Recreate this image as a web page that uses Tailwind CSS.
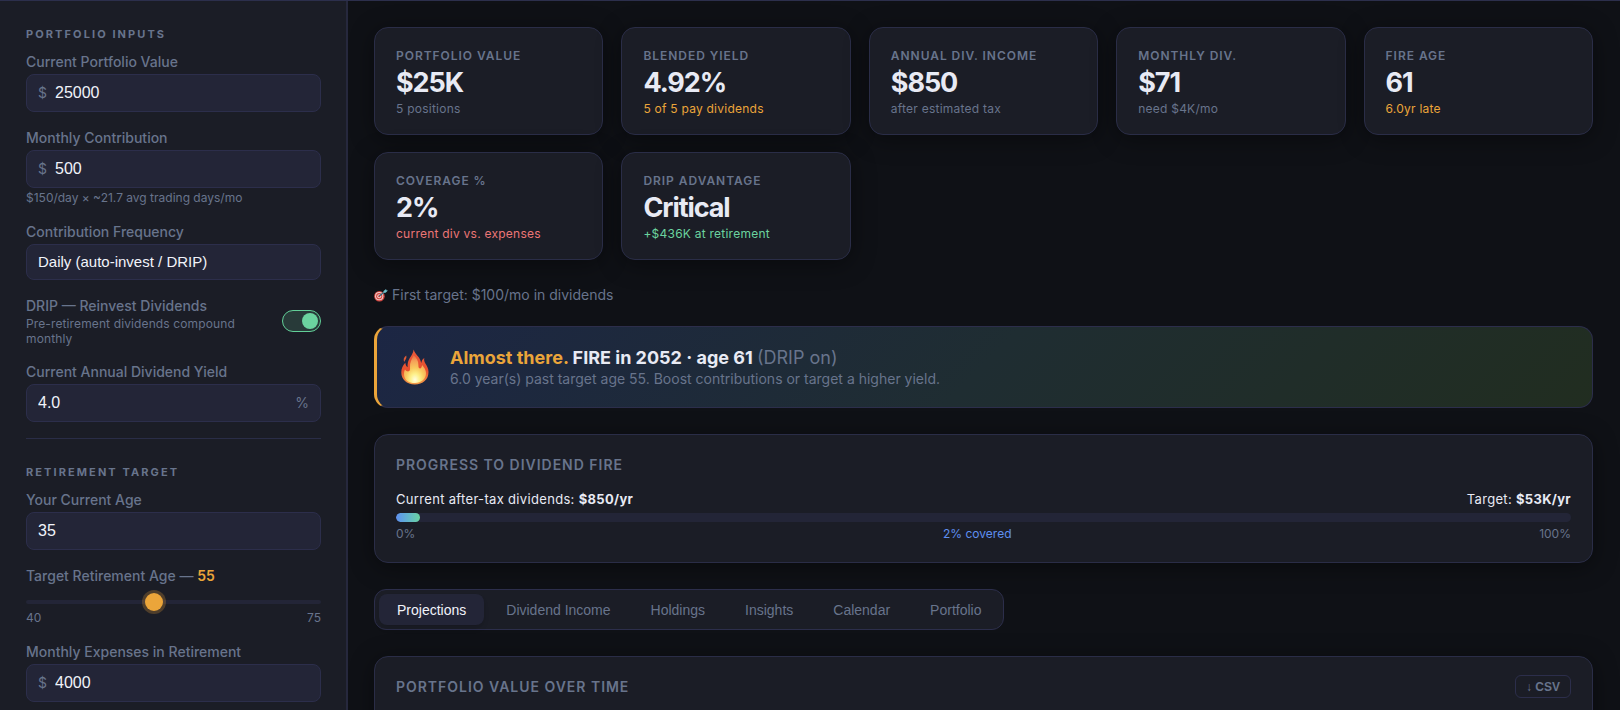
<!DOCTYPE html>
<html lang="en">
<head>
    <meta charset="UTF-8">
    <meta name="viewport" content="width=device-width, initial-scale=1.0">
    <title>Dividend FIRE Planner</title>
    <script src="https://cdn.jsdelivr.net/npm/@tailwindcss/browser@4"></script>
</head>
<body class="h-screen overflow-hidden bg-[#0f1116] font-[Inter,sans-serif] text-[#e8eaf4] antialiased">
    <div class="flex h-full border-t border-[#2c2f4c]">

        <!-- Sidebar -->
        <aside class="w-[348px] shrink-0 overflow-hidden border-r-2 border-[#26283d] bg-[#1b1d26] pr-[25px] pl-[26px] text-[#68748c]">
            <section class="border-b border-[#2a2d47] pt-[25px] pb-4">
                <h2 class="mb-2.5 text-[11px] leading-4 font-bold tracking-[0.19em] uppercase">Portfolio Inputs</h2>

                <div class="flex flex-col gap-4">
                    <div>
                        <label for="portfolioValue" class="mb-0.5 block text-sm leading-5 font-medium">Current Portfolio Value</label>
                        <div class="flex h-[38px] items-center gap-2 rounded-lg border border-[#2c2e4b] bg-[#232537] px-[11px]">
                            <span class="text-sm">$</span>
                            <input id="portfolioValue" type="text" inputmode="numeric" value="25000" class="w-full min-w-0 bg-transparent font-[Liberation_Sans,sans-serif] text-base text-[#f1f3fa] outline-none">
                        </div>
                    </div>

                    <div>
                        <label for="monthly" class="mb-0.5 block text-sm leading-5 font-medium">Monthly Contribution</label>
                        <div class="flex h-[38px] items-center gap-2 rounded-lg border border-[#2c2e4b] bg-[#232537] px-[11px]">
                            <span class="text-sm">$</span>
                            <input id="monthly" type="text" inputmode="numeric" value="500" class="w-full min-w-0 bg-transparent font-[Liberation_Sans,sans-serif] text-base text-[#f1f3fa] outline-none">
                        </div>
                        <p class="mt-0.5 text-xs leading-4">$150/day × ~21.7 avg trading days/mo</p>
                    </div>

                    <div>
                        <label for="frequency" class="mb-0.5 block text-sm leading-5 font-medium">Contribution Frequency</label>
                        <select id="frequency" class="h-9 w-full appearance-none rounded-lg border border-[#2c2e4b] bg-[#232537] px-[11px] font-[Liberation_Sans,sans-serif] text-[15px] text-[#f1f3fa] outline-none">
                            <option>Daily (auto-invest / DRIP)</option>
                            <option>Weekly</option>
                            <option>Monthly</option>
                        </select>
                    </div>

                    <div class="flex items-center justify-between gap-4">
                        <label for="drip">
                            <span class="block text-sm leading-5 font-medium">DRIP — Reinvest Dividends</span>
                            <span class="block text-xs leading-[15px] tracking-[0.01em]">Pre-retirement dividends compound monthly</span>
                        </label>
                        <input id="drip" type="checkbox" checked class="h-[22px] w-[39px] shrink-0 appearance-none rounded-full border border-[#62cf98] bg-[#283a39] p-0.5 before:block before:size-4 before:rounded-full before:bg-[#6bd39f] checked:before:ml-[17px]">
                    </div>

                    <div>
                        <label for="yield" class="mb-0.5 block text-sm leading-5 font-medium">Current Annual Dividend Yield</label>
                        <div class="flex h-[38px] items-center gap-2 rounded-lg border border-[#2c2e4b] bg-[#232537] px-[11px]">
                            <input id="yield" type="text" inputmode="decimal" value="4.0" class="w-full min-w-0 bg-transparent font-[Liberation_Sans,sans-serif] text-base text-[#f1f3fa] outline-none">
                            <span class="text-sm">%</span>
                        </div>
                    </div>
                </div>
            </section>

            <section class="pt-[25px] pb-4">
                <h2 class="mb-2.5 text-[11px] leading-4 font-bold tracking-[0.19em] uppercase">Retirement Target</h2>

                <div class="flex flex-col gap-4">
                    <div>
                        <label for="age" class="mb-0.5 block text-sm leading-5 font-medium">Your Current Age</label>
                        <div class="flex h-[38px] items-center rounded-lg border border-[#2c2e4b] bg-[#232537] px-[11px]">
                            <input id="age" type="text" inputmode="numeric" value="35" class="w-full min-w-0 bg-transparent font-[Liberation_Sans,sans-serif] text-base text-[#f1f3fa] outline-none">
                        </div>
                    </div>

                    <div>
                        <label for="targetAge" class="block text-sm leading-5 font-medium">Target Retirement Age — <span id="targetAgeValue" class="font-semibold text-[#eba53a]">55</span></label>
                        <input id="targetAge" type="range" min="40" max="75" value="55" class="mt-2 block h-4 w-full appearance-none bg-transparent [&::-webkit-slider-runnable-track]:h-1 [&::-webkit-slider-runnable-track]:rounded-full [&::-webkit-slider-runnable-track]:bg-[#232537] [&::-webkit-slider-thumb]:-mt-[7px] [&::-webkit-slider-thumb]:size-[18px] [&::-webkit-slider-thumb]:appearance-none [&::-webkit-slider-thumb]:rounded-full [&::-webkit-slider-thumb]:bg-[#eba53a] [&::-webkit-slider-thumb]:shadow-[0_0_0_3px_rgba(235,165,58,0.25)]">
                        <div class="flex justify-between text-xs leading-4">
                            <span>40</span>
                            <span>75</span>
                        </div>
                    </div>

                    <div>
                        <label for="expenses" class="mb-0.5 block text-sm leading-5 font-medium">Monthly Expenses in Retirement</label>
                        <div class="flex h-[38px] items-center gap-2 rounded-lg border border-[#2c2e4b] bg-[#232537] px-[11px]">
                            <span class="text-sm">$</span>
                            <input id="expenses" type="text" inputmode="numeric" value="4000" class="w-full min-w-0 bg-transparent font-[Liberation_Sans,sans-serif] text-base text-[#f1f3fa] outline-none">
                        </div>
                    </div>
                </div>
            </section>
        </aside>

        <!-- Main -->
        <main class="min-w-0 flex-1 overflow-hidden pt-[26px] pr-[27px] pl-[26px]">

            <!-- KPI cards -->
            <div class="grid grid-cols-5 gap-x-[18px] gap-y-[17px]">
                <div class="rounded-[14px] border border-[#2a2d47] bg-[#1b1d26] px-[21px] pt-5 pb-[17px] shadow-[0_4px_24px_rgba(0,0,0,0.4)]">
                    <h3 class="text-xs leading-4 font-semibold tracking-[0.08em] text-[#68748c] uppercase">Portfolio Value</h3>
                    <p class="mt-[5px] text-[27px] leading-7 font-bold tracking-[-0.04em]">$25K</p>
                    <p class="mt-1 text-xs leading-4 tracking-[0.02em] text-[#68748c]">5 positions</p>
                </div>
                <div class="rounded-[14px] border border-[#2a2d47] bg-[#1b1d26] px-[21px] pt-5 pb-[17px] shadow-[0_4px_24px_rgba(0,0,0,0.4)]">
                    <h3 class="text-xs leading-4 font-semibold tracking-[0.08em] text-[#68748c] uppercase">Blended Yield</h3>
                    <p class="mt-[5px] text-[27px] leading-7 font-bold tracking-[-0.04em]">4.92%</p>
                    <p class="mt-1 text-xs leading-4 tracking-[0.02em] text-[#eba53a]">5 of 5 pay dividends</p>
                </div>
                <div class="rounded-[14px] border border-[#2a2d47] bg-[#1b1d26] px-[21px] pt-5 pb-[17px] shadow-[0_4px_24px_rgba(0,0,0,0.4)]">
                    <h3 class="text-xs leading-4 font-semibold tracking-[0.08em] text-[#68748c] uppercase">Annual Div. Income</h3>
                    <p class="mt-[5px] text-[27px] leading-7 font-bold tracking-[-0.04em]">$850</p>
                    <p class="mt-1 text-xs leading-4 tracking-[0.02em] text-[#68748c]">after estimated tax</p>
                </div>
                <div class="rounded-[14px] border border-[#2a2d47] bg-[#1b1d26] px-[21px] pt-5 pb-[17px] shadow-[0_4px_24px_rgba(0,0,0,0.4)]">
                    <h3 class="text-xs leading-4 font-semibold tracking-[0.08em] text-[#68748c] uppercase">Monthly Div.</h3>
                    <p class="mt-[5px] text-[27px] leading-7 font-bold tracking-[-0.04em]">$71</p>
                    <p class="mt-1 text-xs leading-4 tracking-[0.02em] text-[#68748c]">need $4K/mo</p>
                </div>
                <div class="rounded-[14px] border border-[#2a2d47] bg-[#1b1d26] px-[21px] pt-5 pb-[17px] shadow-[0_4px_24px_rgba(0,0,0,0.4)]">
                    <h3 class="text-xs leading-4 font-semibold tracking-[0.08em] text-[#68748c] uppercase">FIRE Age</h3>
                    <p class="mt-[5px] text-[27px] leading-7 font-bold tracking-[-0.04em]">61</p>
                    <p class="mt-1 text-xs leading-4 tracking-[0.02em] text-[#eba53a]">6.0yr late</p>
                </div>
                <div class="rounded-[14px] border border-[#2a2d47] bg-[#1b1d26] px-[21px] pt-5 pb-[17px] shadow-[0_4px_24px_rgba(0,0,0,0.4)]">
                    <h3 class="text-xs leading-4 font-semibold tracking-[0.08em] text-[#68748c] uppercase">Coverage %</h3>
                    <p class="mt-[5px] text-[27px] leading-7 font-bold tracking-[-0.04em]">2%</p>
                    <p class="mt-1 text-xs leading-4 tracking-[0.02em] text-[#ec7676]">current div vs. expenses</p>
                </div>
                <div class="rounded-[14px] border border-[#2a2d47] bg-[#1b1d26] px-[21px] pt-5 pb-[17px] shadow-[0_4px_24px_rgba(0,0,0,0.4)]">
                    <h3 class="text-xs leading-4 font-semibold tracking-[0.08em] text-[#68748c] uppercase">DRIP Advantage</h3>
                    <p class="mt-[5px] text-[27px] leading-7 font-bold tracking-[-0.04em]">Critical</p>
                    <p class="mt-1 text-xs leading-4 tracking-[0.02em] text-[#6bd39f]">+$436K at retirement</p>
                </div>
            </div>

            <!-- Next milestone -->
            <p class="mt-[25px] mb-[21px] flex items-center gap-1 text-sm leading-5 text-[#68748c]">
                <svg class="size-3.5" viewBox="0 0 14 14" aria-hidden="true">
                    <ellipse cx="5.4" cy="8.2" rx="5.3" ry="5.2" fill="#cf4640"/>
                    <circle cx="5.200" cy="8.2" r="4.1" fill="#efd0cd"/>
                    <circle cx="5.200" cy="8.2" r="3.1" fill="#d8453f"/>
                    <circle cx="5.200" cy="8.2" r="2" fill="#efd0cd"/>
                    <circle cx="5.200" cy="8.2" r="1" fill="#c93a35"/>
                    <path d="M5.400 8 10.600 3.700" stroke="#2f6f80" stroke-width="1.200"/>
                    <path d="M9.300 4.800 9.600 3 12.100.9l.2 1.400 1.600.3-2.300 2.100z" fill="#6fbfc9"/>
                </svg>
                First target: $100/mo in dividends
            </p>

            <!-- FIRE banner -->
            <div class="flex items-center gap-5 rounded-[14px] border border-l-[3px] border-[#2c2e4b] border-l-[#eba53a] bg-linear-[135deg,#1c2644,#1f2d32_50%,#212d20] py-[19px] pr-6 pl-[23px]">
                <svg class="h-9 w-[30px]" viewBox="0 0 30 36" aria-hidden="true">
                    <defs>
                        <linearGradient id="outerFlame" x1="0" y1="0" x2="0" y2="1">
                            <stop offset="0" stop-color="#e8593a"/>
                            <stop offset=".6" stop-color="#e8502e"/>
                            <stop offset="1" stop-color="#f39a48"/>
                        </linearGradient>
                        <radialGradient id="innerFlame" cx=".5" cy=".88" r=".85">
                            <stop offset="0" stop-color="#fffde0"/>
                            <stop offset=".25" stop-color="#fdf08a"/>
                            <stop offset=".5" stop-color="#f9c95e"/>
                            <stop offset=".8" stop-color="#f4a058"/>
                            <stop offset="1" stop-color="#ec7348"/>
                        </radialGradient>
                    </defs>
                    <path d="M13.700.4c-.6 3.700-2.300 5.900-3.900 8.600-1.500 2.500-2.500 5-2.200 9.300-1.300-1-2-2.500-2.300-4.600C3 16.400 1.300 19.400 1.300 23.200c0 7.400 5.400 12.200 13.500 12.200S28.500 30.700 28.500 23c0-3.700-1.500-5.900-3-8.300-1.100-1.800-1.700-3.300-1.200-5.600-1.800 1-2.800 2.700-2.900 5-.8-2-1.100-3.700-2.500-5.700C17.100 5.900 14.300 3.800 13.700.4z" fill="url(#outerFlame)"/>
                    <path d="M6.200 6.600c.5 1.700.2 2.900-.6 3.900-.6.800-1.100 1.500-1.300 2.600-1.300-2.500-.5-4.700 1.900-6.500z" fill="#df5a35"/>
                    <path d="M13.700 6.200c2.600 2.600 4.800 5.800 4.700 9.600 0 2.300.2 3.600 1.500 3.600 1.400 0 1.800-1.500 2.200-3.500 2.200 2.500 3.900 5 3.900 8.200 0 6-4.500 9.900-11.100 9.900S4 30.600 4 24.900c0-1.900.3-3.300 1-4.500.8 1.300 1.800 2 3 2 2 0 2.200-1.600 2-4.100-.3-4.600 1.500-7.900 3.700-12.100z" fill="url(#innerFlame)"/>
                </svg>
                <div>
                    <p class="text-lg leading-6 font-bold"><span class="text-[#eba53a]">Almost there.</span> FIRE in 2052 · age 61 <span class="font-normal text-[#68748c]">(DRIP on)</span></p>
                    <p class="text-sm leading-[18px] text-[#68748c]">6.0 year(s) past target age 55. Boost contributions or target a higher yield.</p>
                </div>
            </div>

            <!-- Progress -->
            <section class="mt-[26px] rounded-[14px] border border-[#2a2d47] bg-[#1b1d26] px-[21px] py-5 shadow-[0_4px_24px_rgba(0,0,0,0.4)]">
                <h2 class="mb-3.5 text-sm leading-5 font-semibold tracking-[0.07em] text-[#68748c] uppercase">Progress to Dividend FIRE</h2>
                <div class="mb-1 flex justify-between text-[13px] leading-5 tracking-wide">
                    <span>Current after-tax dividends: <strong>$850/yr</strong></span>
                    <span>Target: <strong>$53K/yr</strong></span>
                </div>
                <div class="h-[9px] overflow-hidden rounded-full bg-[#232537]">
                    <div class="h-full rounded-full bg-linear-to-r from-[#5f8ff0] to-[#6bd39f]" style="width: 2%"></div>
                </div>
                <div class="mt-1 flex justify-between text-xs leading-4 text-[#68748c]">
                    <span>0%</span>
                    <span class="text-[#5f8ff0]">2% covered</span>
                    <span>100%</span>
                </div>
            </section>

            <!-- Tabs -->
            <nav class="mt-[26px] flex w-fit gap-1 rounded-xl border border-[#2c2e4b] bg-[#1b1d26] p-1 font-[Liberation_Sans,sans-serif] text-sm text-[#68748c]">
                <button class="h-[31px] rounded-lg bg-[#232537] px-[18px] text-[#f1f3fa] shadow-md">Projections</button>
                <button class="h-[31px] rounded-lg px-[18px]">Dividend Income</button>
                <button class="h-[31px] rounded-lg px-[18px]">Holdings</button>
                <button class="h-[31px] rounded-lg px-[18px]">Insights</button>
                <button class="h-[31px] rounded-lg px-[18px]">Calendar</button>
                <button class="h-[31px] rounded-lg px-[18px]">Portfolio</button>
            </nav>

            <!-- Chart -->
            <section class="mt-[26px] h-80 rounded-[14px] border border-[#2a2d47] bg-[#1b1d26] px-[21px] py-[18px] shadow-[0_4px_24px_rgba(0,0,0,0.4)]">
                <div class="flex items-center justify-between">
                    <h2 class="text-sm leading-5 font-semibold tracking-[0.07em] text-[#68748c] uppercase">Portfolio Value Over Time</h2>
                    <button class="h-[23px] rounded-md border border-[#2c2e4b] px-2.5 font-[Liberation_Sans,sans-serif] text-xs font-bold text-[#68748c]">↓ CSV</button>
                </div>
            </section>
        </main>
    </div>

    <script>
        // keep the age next to the label in step with the slider
        const targetAge = document.getElementById('targetAge');
        targetAge.addEventListener('input', () => {
            document.getElementById('targetAgeValue').textContent = targetAge.value;
        });
    </script>
</body>
</html>
